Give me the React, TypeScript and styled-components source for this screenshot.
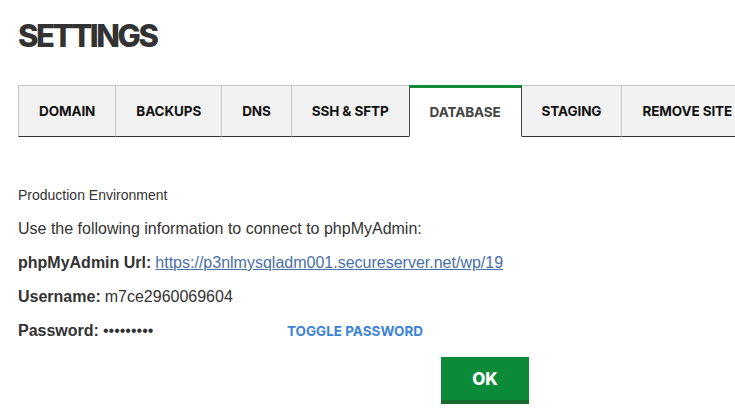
import React, { useState } from 'react'
import styled, { createGlobalStyle } from 'styled-components'

const GlobalStyle = createGlobalStyle`
  body {
    margin: 0;
    background: #ffffff;
    overflow: hidden;
  }
`

const Page = styled.div`
  padding-left: 18px;
  width: 735px;
  box-sizing: border-box;
  overflow: hidden;
`

const Title = styled.h1`
  margin: 20px 0 0 0;
  font-family: Inter, "Open Sans", sans-serif;
  font-weight: 800;
  font-size: 31px;
  line-height: 32px;
  letter-spacing: -2.4px;
  color: #333333;
`

const TabBar = styled.div`
  display: flex;
  margin-top: 33px;
  white-space: nowrap;
`

const Tab = styled.div<{ $active?: boolean; $first?: boolean }>`
  box-sizing: border-box;
  height: 52px;
  flex: none;
  display: flex;
  align-items: center;
  padding: 0 20px;
  font-family: Inter, "Open Sans", sans-serif;
  font-weight: 700;
  font-size: 13.5px;
  letter-spacing: -0.1px;
  cursor: pointer;
  background: ${p => (p.$active ? '#ffffff' : '#f2f2f2')};
  color: ${p => (p.$active ? '#444444' : '#111111')};
  border-top: ${p => (p.$active ? '3px solid #138a36' : '1px solid #c8c8c8')};
  border-right: 1px solid ${p => (p.$active ? '#444444' : '#c8c8c8')};
  border-left: ${p => (p.$active ? '1px solid #444444' : p.$first ? '1px solid #c8c8c8' : 'none')};
  border-bottom: 1px solid ${p => (p.$active ? '#ffffff' : '#333333')};
  margin-left: ${p => (p.$active ? '-1px' : '0')};
`

const Content = styled.div`
  margin-top: 50px;
  font-family: "Liberation Sans", Arial, sans-serif;
  color: #333333;
`

const Environment = styled.div`
  font-size: 14px;
  line-height: 16px;
  margin-bottom: 9px;
`

const Row = styled.div`
  display: flex;
  align-items: baseline;
  font-size: 16px;
  line-height: 34px;
  white-space: nowrap;
`

const Label = styled.strong`
  font-weight: 700;
  margin-right: 4px;
`

const Link = styled.a`
  color: #4a6fa8;
  text-decoration: underline;
`

const PasswordValue = styled.span`
  width: 184px;
`

const ToggleButton = styled.button`
  border: none;
  background: none;
  padding: 0;
  cursor: pointer;
  font-family: Inter, "Open Sans", sans-serif;
  font-weight: 700;
  font-size: 13.5px;
  color: #3d83d4;
`

const Footer = styled.div`
  padding-left: 423px;
  margin-top: 9px;
`

const OkButton = styled.button`
  box-sizing: border-box;
  width: 88px;
  height: 47px;
  border: none;
  border-bottom: 4px solid #17692c;
  background: #0b8b37;
  color: #ffffff;
  font-family: Inter, "Open Sans", sans-serif;
  font-weight: 800;
  font-size: 17px;
  cursor: pointer;
`

const tabs = ['DOMAIN', 'BACKUPS', 'DNS', 'SSH & SFTP', 'DATABASE', 'STAGING', 'REMOVE SITE']

export default function App() {
  const [active, setActive] = useState('DATABASE')
  const [showPassword, setShowPassword] = useState(false)

  return (
    <Page>
      <GlobalStyle />
      <Title>SETTINGS</Title>
      <TabBar>
        {tabs.map((t, i) => (
          <Tab key={t} $first={i === 0} $active={t === active} onClick={() => setActive(t)}>
            {t}
          </Tab>
        ))}
      </TabBar>
      <Content>
        <Environment>Production Environment</Environment>
        <Row>Use the following information to connect to phpMyAdmin:</Row>
        <Row>
          <Label>phpMyAdmin Url:</Label>
          <Link href="#">https://p3nlmysqladm001.secureserver.net/wp/19</Link>
        </Row>
        <Row>
          <Label>Username:</Label>
          m7ce2960069604
        </Row>
        <Row>
          <Label>Password:</Label>
          <PasswordValue>{showPassword ? 'Xk29pLm4q' : '•••••••••'}</PasswordValue>
          <ToggleButton onClick={() => setShowPassword(s => !s)}>TOGGLE PASSWORD</ToggleButton>
        </Row>
      </Content>
      <Footer>
        <OkButton>OK</OkButton>
      </Footer>
    </Page>
  )
}
